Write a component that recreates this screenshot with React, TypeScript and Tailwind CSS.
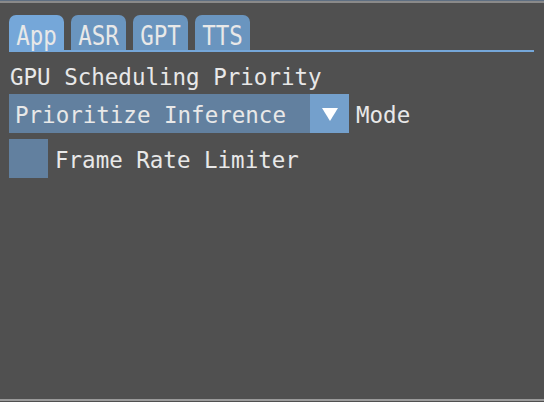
import { useState } from 'react';

const tabs = ['App', 'ASR', 'GPT', 'TTS'];

export default function App() {
    const [active, setActive] = useState<string>('App');
    const [limit, setLimit] = useState<boolean>(false);

    return (
        <div
            className="w-[544px] h-[402px] bg-[#505050] text-[#e8e8e8] text-[22.5px] leading-none flex flex-col overflow-hidden"
            style={{ fontFamily: '"DejaVu Sans Mono", monospace' }}
        >
            {/* window frame top */}
            <div className="h-[1px] bg-[#5f6f82]" />
            <div className="h-[2px] bg-[#8a8a8a]" />
            <div className="flex-1 flex flex-col pl-[9px] pr-[10px] pt-[12px]">
                {/* tab bar */}
                <div className="flex gap-[7px] h-[35px] items-end">
                    {tabs.map((t) => (
                        <button
                            key={t}
                            onClick={() => setActive(t)}
                            className={
                                'h-[35px] w-[55px] rounded-t-[7px] flex items-center justify-center pt-[6px] ' +
                                (active === t ? 'bg-[#75a7d9]' : 'bg-[#6a95bf]')
                            }
                        >
                            <span className="scale-y-[1.2]">{t}</span>
                        </button>
                    ))}
                </div>
                <div className="h-[2px] bg-[#75a7d9]" />

                <div className="pl-[1px] pt-[14px] h-[28px]">GPU Scheduling Priority</div>

                {/* combo */}
                <div className="flex items-center mt-[14px] gap-[7px]">
                    <div className="flex h-[39px] w-[340px]">
                        <div className="flex-1 bg-[#62809f] flex items-center pl-[6px] pt-[4px]">Prioritize Inference</div>
                        <div className="w-[39px] bg-[#74a0cc] flex items-center justify-center">
                            <svg width="18" height="16" viewBox="0 0 18 16">
                                <path d="M1 2 L17 2 L9 15 Z" fill="#ffffff" />
                            </svg>
                        </div>
                    </div>
                    <span className="pt-[4px]">Mode</span>
                </div>

                {/* checkbox */}
                <div className="flex items-center mt-[6px] gap-[7px]">
                    <button
                        onClick={() => setLimit(!limit)}
                        className="w-[39px] h-[39px] bg-[#62809f] flex items-center justify-center"
                    >
                        {limit && (
                            <svg width="26" height="22" viewBox="0 0 26 22">
                                <path d="M3 11 L10 18 L23 3" stroke="#e8e8e8" strokeWidth="3" fill="none" />
                            </svg>
                        )}
                    </button>
                    <span className="pt-[3px]">Frame Rate Limiter</span>
                </div>
            </div>
            {/* window frame bottom */}
            <div className="h-[2px] bg-[#9a9a9a] mb-[1px]" />
        </div>
    );
}
